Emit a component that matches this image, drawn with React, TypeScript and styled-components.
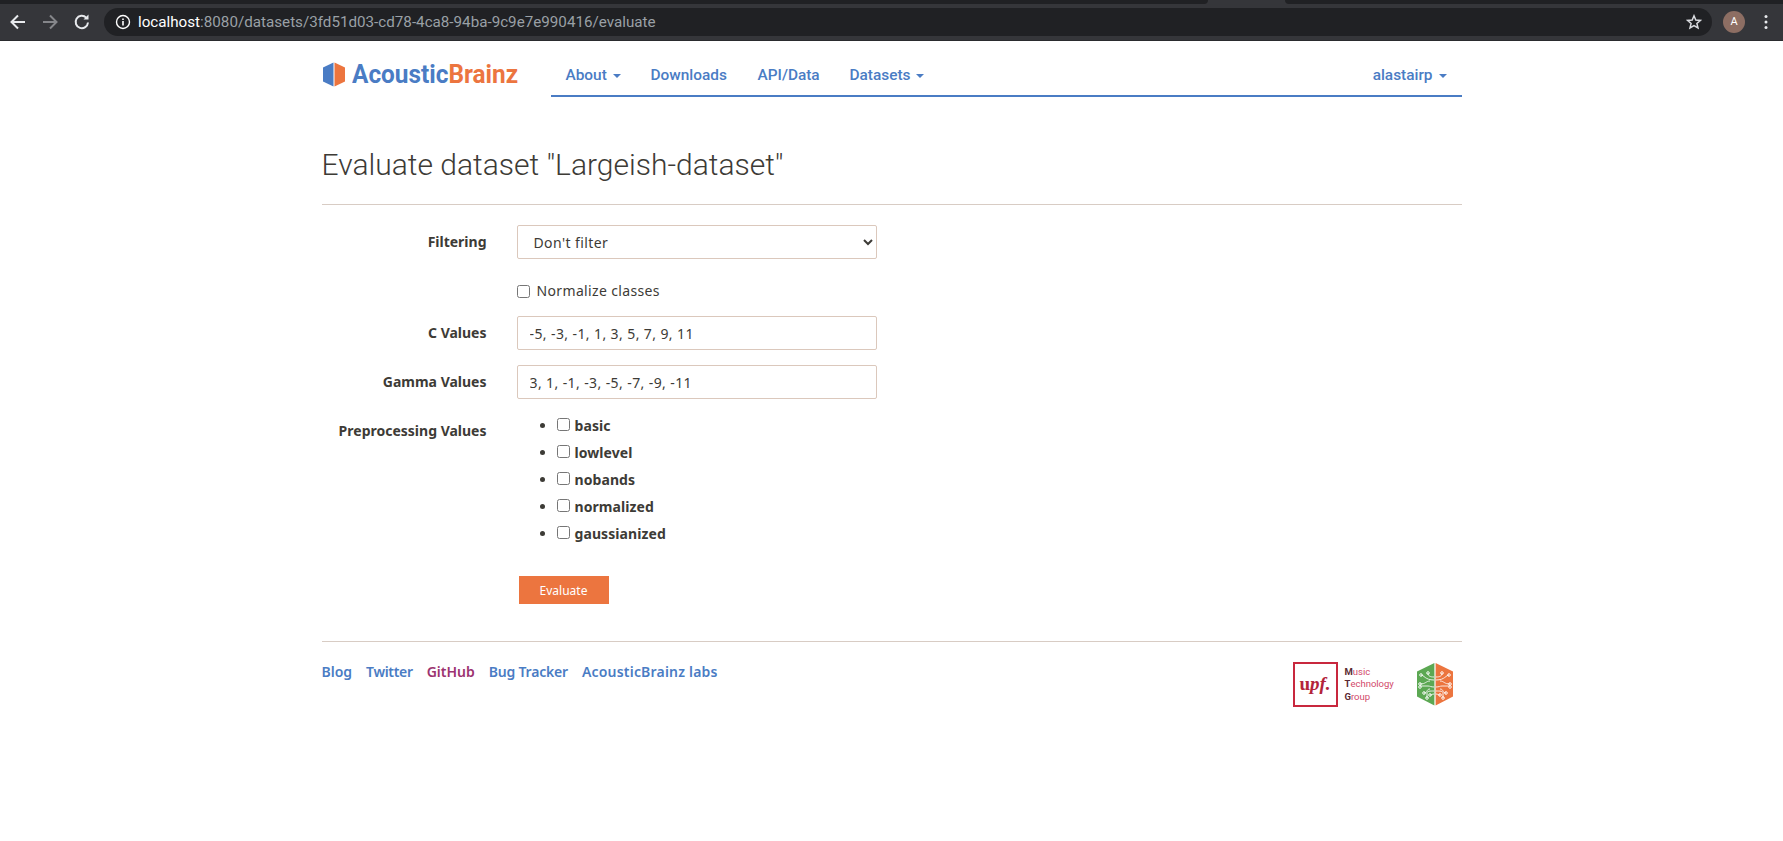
import React from "react";
import styled, { createGlobalStyle } from "styled-components";

const Global = createGlobalStyle`
  html, body { margin: 0; padding: 0; background: #fff; }
  body { font-family: "Noto Sans", "Liberation Sans", sans-serif; font-size: 14px; color: #3d3b36; line-height: 20px; }
`;

const BrowserBar = styled.div`
  height: 41px;
  background: #35363a;
  border-bottom: 1px solid #2a2b2e;
  box-sizing: border-box;
`;
const TabStrip = styled.div`
  height: 4px;
  display: flex;
  justify-content: space-between;
`;
const TabEdge = styled.div<{ $w: number; $side: "left" | "right" }>`
  height: 4px;
  width: ${(p) => p.$w}px;
  background: #202124;
  border-bottom-${(p) => p.$side}-radius: 4px;
`;
const Toolbar = styled.div`
  height: 36px;
  display: flex;
  align-items: center;
  padding: 0 15px 0 8px;
`;
const NavIcon = styled.svg<{ $dim?: boolean }>`
  width: 20px;
  height: 20px;
  margin-right: 12px;
  flex: none;
  stroke: ${(p) => (p.$dim ? "#85868a" : "#e8eaed")};
  stroke-width: 2;
  fill: none;
`;
const Omnibox = styled.div`
  flex: 1;
  height: 28px;
  border-radius: 14px;
  background: #202124;
  display: flex;
  align-items: center;
  padding: 0 10px 0 34px;
  position: relative;
  font: 15.2px/28px Roboto, sans-serif;
  color: #9aa0a6;
`;
const InfoIcon = styled.svg`
  position: absolute;
  left: 11px;
  top: 6px;
  width: 16px;
  height: 16px;
`;
const Host = styled.span`
  color: #fff;
`;
const Star = styled.svg`
  margin-left: auto;
  width: 16px;
  height: 16px;
  fill: none;
  stroke: #dadce0;
  stroke-width: 1.5;
`;
const Avatar = styled.div`
  width: 22px;
  height: 22px;
  margin-left: 11px;
  border-radius: 50%;
  background: #8d6e63;
  color: #fff;
  font: 11px/22px Roboto, sans-serif;
  text-align: center;
`;
const Dots = styled.svg`
  width: 4px;
  height: 16px;
  margin-left: 19px;
  fill: #e8eaed;
`;

const Container = styled.div`
  width: 1140px;
  margin: 0 auto;
`;
const Header = styled.header`
  display: flex;
  height: 56px;
`;
const Brand = styled.a`
  width: 229px;
  flex: none;
  display: flex;
  align-items: center;
  padding-top: 11px;
  box-sizing: border-box;
`;
const BrandText = styled.span`
  font: 700 25px/30px Roboto, sans-serif;
  color: #4a7cc4;
  display: inline-block;
  margin-left: 6px;
  transform: scaleX(0.975);
  transform-origin: left center;
  white-space: nowrap;
`;
const BrandAccent = styled.span`
  color: #ec753f;
`;
const Nav = styled.nav`
  flex: 1;
  display: flex;
  align-items: center;
  border-bottom: 2px solid #4a7cc4;
  padding: 0 15px;
  box-sizing: border-box;
`;
const NavLink = styled.a<{ $right?: boolean; $w?: number }>`
  font: 500 15.4px/20px Roboto, sans-serif;
  color: #4a7cc4;
  width: ${(p) => (p.$w ? p.$w + "px" : "auto")};
  margin-left: ${(p) => (p.$right ? "auto" : "0")};
  margin-top: 14px;
  white-space: nowrap;
`;
const Caret = styled.span`
  display: inline-block;
  width: 0;
  height: 0;
  margin-left: 6px;
  vertical-align: middle;
  border-top: 4px solid currentColor;
  border-left: 4px solid transparent;
  border-right: 4px solid transparent;
`;

const Title = styled.h1`
  font: 300 30px/34px Roboto, sans-serif;
  color: #3d3b36;
  margin: 51px 0 0;
  padding-bottom: 22px;
  border-bottom: 1px solid #d8ccc4;
`;
const Form = styled.form`
  margin-top: 20px;
`;
const Row = styled.div<{ $mb?: number }>`
  display: flex;
  margin-bottom: ${(p) => p.$mb ?? 15}px;
`;
const Label = styled.label`
  width: 165px;
  flex: none;
  margin-right: 30px;
  text-align: right;
  font-weight: 700;
  font-size: 14px;
  padding-top: 7px;
  line-height: 20px;
  color: #3d3b36;
`;
const Field = styled.div`
  width: 360px;
`;
const controlCss = `
  width: 100%;
  height: 34px;
  box-sizing: border-box;
  border: 1px solid #dbc8bc;
  border-radius: 2px;
  background: #fff;
  padding: 6px 12px;
  font-family: "Noto Sans", sans-serif;
  font-size: 14px;
  letter-spacing: 0.4px;
  color: #3d3b36;
  outline: none;
`;
const Select = styled.select`
  ${controlCss}
`;
const TextInput = styled.input`
  ${controlCss}
`;
const CheckLabel = styled.label`
  display: flex;
  align-items: center;
  height: 34px;
  font-size: 14px;
  letter-spacing: 0.35px;
`;
const Check = styled.input`
  width: 13px;
  height: 13px;
  margin: 0 7px 0 0;
`;
const Bullets = styled.ul`
  margin: 0;
  padding: 0 0 0 40px;
  font-weight: 700;
  font-size: 14px;
  letter-spacing: 0.08px;
  position: relative;
  top: -2px;
`;
const Bullet = styled.li`
  height: 27px;
  line-height: 27px;
`;
const ItemCheck = styled.input`
  width: 13px;
  height: 13px;
  margin: 0 4px 0 0;
  position: relative;
  top: -3px;
  vertical-align: middle;
`;
const ItemName = styled.span`
  margin-left: 1px;
`;
const Submit = styled.button`
  width: 90px;
  height: 28px;
  margin-left: 197px;
  border: none;
  border-radius: 0;
  background: #ec753f;
  color: #fff;
  font-family: "Noto Sans", sans-serif;
  font-size: 12px;
  display: block;
`;
const Footer = styled.footer`
  margin-top: 37px;
  border-top: 1px solid #d8ccc4;
  display: flex;
  justify-content: space-between;
  padding-top: 20px;
`;
const FooterLinks = styled.div`
  display: flex;
  gap: 14px;
  height: 20px;
`;
const FooterLink = styled.a<{ $visited?: boolean; $track?: number }>`
  font-weight: 600;
  font-size: 14px;
  letter-spacing: ${(p) => p.$track ?? 0}px;
  color: ${(p) => (p.$visited ? "#9c3370" : "#4a7cc4")};
`;
const Partners = styled.div`
  display: flex;
  align-items: center;
  padding-right: 8px;
`;
const UpfBox = styled.div`
  width: 45px;
  height: 45px;
  box-sizing: border-box;
  border: 2px solid #c8283e;
  font: italic 700 19px/39px "Liberation Serif", serif;
  color: #b3243a;
  text-align: center;
`;
const UpfU = styled.span`
  font-style: normal;
`;
const MtgText = styled.div`
  margin-left: 7px;
  width: 71px;
  font: 400 9.5px/12.5px Roboto, sans-serif;
  color: #d24a6a;
`;
const Initial = styled.b`
  color: #5a2a33;
`;
const Hex = styled.svg`
  width: 38px;
  height: 45px;
`;

const TRACES = [
  "M12 11 C12 14 14 15 18 15",
  "M5 13 C8 13 9 18 18 18",
  "M4 22 C10 22 10 19 14 19",
  "M4 24 H12 C14 24 15 25 18 25",
  "M8 31 C12 31 10 27 14 27",
  "M11 36 V31 C11 29 14 29 18 29",
  "M14 33 C16 33 16 32 18 32",
];
const NODES = [[12, 11], [5, 13], [4, 22], [4, 25], [8, 31], [11, 36], [14, 33]];

function Circuit() {
  return (
    <>
      <g stroke="#fff" strokeWidth="1" fill="none" opacity="0.85">
        {TRACES.map((d) => (
          <path key={d} d={d} />
        ))}
      </g>
      <g fill="none" stroke="#fff" strokeWidth="0.9">
        {NODES.map(([x, y]) => (
          <circle key={`${x}-${y}`} cx={x} cy={y} r="1.3" />
        ))}
      </g>
    </>
  );
}

function Hexagon() {
  return (
    <Hex viewBox="0 0 38 45">
      <path d="M18.4 1V43.5L1 34.5V9.5Z" fill="#5ca853" />
      <path d="M19.6 1V43.5L37 34.5V9.5Z" fill="#ec753f" />
      <Circuit />
      <g transform="matrix(-1 0 0 1 38 0)">
        <Circuit />
      </g>
    </Hex>
  );
}

export default function App() {
  return (
    <>
      <Global />
      <BrowserBar>
        <TabStrip>
          <TabEdge $w={1208} $side="right" />
          <TabEdge $w={498} $side="left" />
        </TabStrip>
        <Toolbar>
          <NavIcon viewBox="0 0 20 20">
            <path d="M17 10H4M10 3.5L3.5 10L10 16.5" />
          </NavIcon>
          <NavIcon viewBox="0 0 20 20" $dim>
            <path d="M3 10H16M10 3.5L16.5 10L10 16.5" />
          </NavIcon>
          <NavIcon viewBox="0 0 20 20">
            <path d="M16 10.5A6.2 6.2 0 1 1 14.2 5.6" />
            <path d="M16.5 2.5V7.5H11.5Z" fill="#e8eaed" stroke="none" />
          </NavIcon>
          <Omnibox>
            <InfoIcon viewBox="0 0 16 16">
              <circle cx="8" cy="8" r="6.5" fill="none" stroke="#fff" strokeWidth="1.4" />
              <path d="M8 7V11.5M8 4.5V6" stroke="#fff" strokeWidth="1.6" />
            </InfoIcon>
            <Host>localhost</Host>:8080/datasets/3fd51d03-cd78-4ca8-94ba-9c9e7e990416/evaluate
            <Star viewBox="0 0 16 16">
              <path d="M8 1.8L9.8 6L14.4 6.4L10.9 9.4L12 13.9L8 11.5L4 13.9L5.1 9.4L1.6 6.4L6.2 6Z" />
            </Star>
          </Omnibox>
          <Avatar>A</Avatar>
          <Dots viewBox="0 0 4 16">
            <circle cx="2" cy="2.5" r="1.5" />
            <circle cx="2" cy="8" r="1.5" />
            <circle cx="2" cy="13.5" r="1.5" />
          </Dots>
        </Toolbar>
      </BrowserBar>
      <Container>
        <Header>
          <Brand>
            <svg width="24" height="25" viewBox="0 0 24 25">
              <path d="M11.5 0.5V24.5L1 19.5V5.5Z" fill="#4a7cc4" />
              <path d="M12.5 0.5V24.5L23 19.5V5.5Z" fill="#ec753f" />
            </svg>
            <BrandText>
              Acoustic<BrandAccent>Brainz</BrandAccent>
            </BrandText>
          </Brand>
          <Nav>
            <NavLink $w={85}>
              About<Caret />
            </NavLink>
            <NavLink $w={107}>Downloads</NavLink>
            <NavLink $w={92}>API/Data</NavLink>
            <NavLink>
              Datasets<Caret />
            </NavLink>
            <NavLink $right>
              alastairp<Caret />
            </NavLink>
          </Nav>
        </Header>
        <Title>Evaluate dataset "Largeish-dataset"</Title>
        <Form>
          <Row>
            <Label>Filtering</Label>
            <Field>
              <Select defaultValue="none">
                <option value="none">Don't filter</option>
              </Select>
            </Field>
          </Row>
          <Row $mb={8}>
            <Label />
            <Field>
              <CheckLabel>
                <Check type="checkbox" />
                Normalize classes
              </CheckLabel>
            </Field>
          </Row>
          <Row>
            <Label>C Values</Label>
            <Field>
              <TextInput defaultValue="-5, -3, -1, 1, 3, 5, 7, 9, 11" />
            </Field>
          </Row>
          <Row>
            <Label>Gamma Values</Label>
            <Field>
              <TextInput defaultValue="3, 1, -1, -3, -5, -7, -9, -11" />
            </Field>
          </Row>
          <Row $mb={27}>
            <Label>Preprocessing Values</Label>
            <Field>
              <Bullets>
                {["basic", "lowlevel", "nobands", "normalized", "gaussianized"].map((n) => (
                  <Bullet key={n}>
                    <ItemCheck type="checkbox" />
                    <ItemName>{n}</ItemName>
                  </Bullet>
                ))}
              </Bullets>
            </Field>
          </Row>
          <Submit type="button">Evaluate</Submit>
        </Form>
        <Footer>
          <FooterLinks>
            <FooterLink>Blog</FooterLink>
            <FooterLink $track={-0.33}>Twitter</FooterLink>
            <FooterLink $visited>GitHub</FooterLink>
            <FooterLink $track={-0.2}>Bug Tracker</FooterLink>
            <FooterLink $track={0.2}>AcousticBrainz labs</FooterLink>
          </FooterLinks>
          <Partners>
            <UpfBox>
              <UpfU>u</UpfU>pf.
            </UpfBox>
            <MtgText>
              <Initial>M</Initial>usic
              <br />
              <Initial>T</Initial>echnology
              <br />
              <Initial>G</Initial>roup
            </MtgText>
            <Hexagon />
          </Partners>
        </Footer>
      </Container>
    </>
  );
}
